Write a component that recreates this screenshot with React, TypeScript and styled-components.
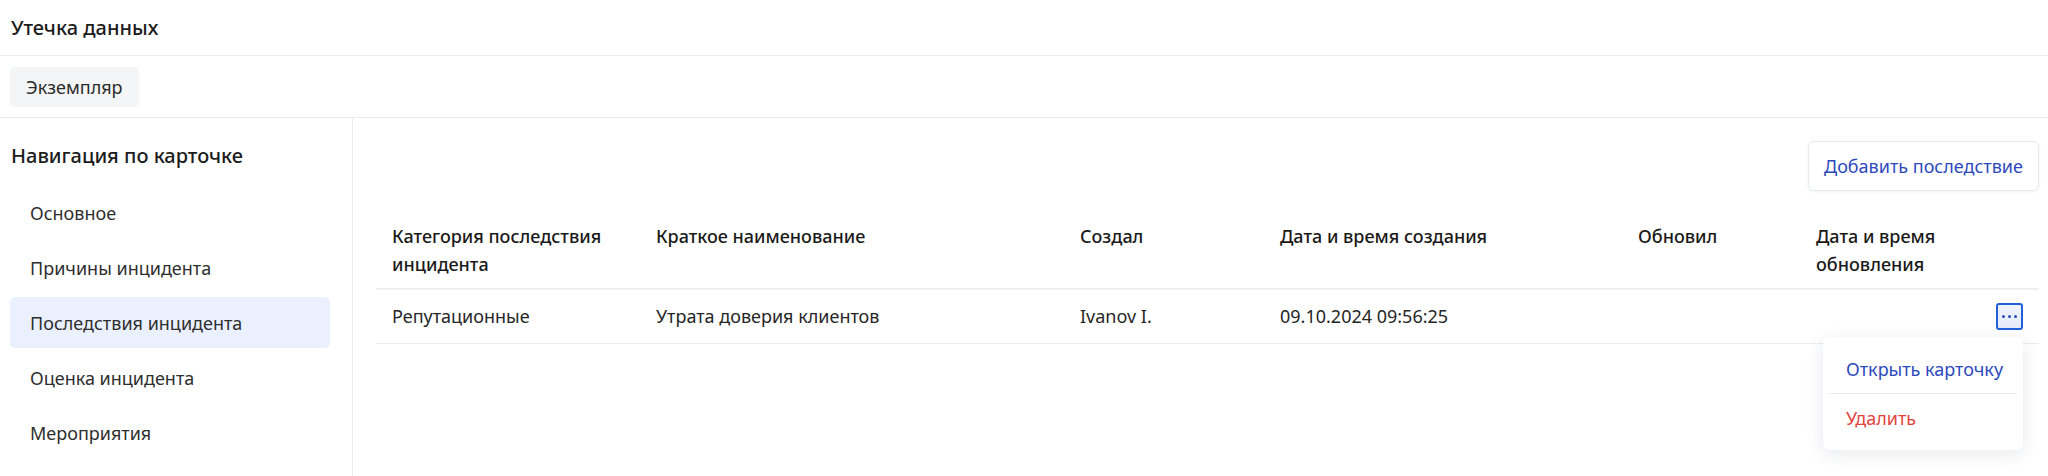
import styled, { createGlobalStyle } from "styled-components";

const navItems = [
  "Основное",
  "Причины инцидента",
  "Последствия инцидента",
  "Оценка инцидента",
  "Мероприятия",
];

const columns = [
  { title: "Категория последствия инцидента", width: 264 },
  { title: "Краткое наименование", width: 424 },
  { title: "Создал", width: 200 },
  { title: "Дата и время создания", width: 358 },
  { title: "Обновил", width: 178 },
  { title: "Дата и время обновления", width: 180 },
];

const rows = [
  {
    id: 1,
    cells: [
      "Репутационные",
      "Утрата доверия клиентов",
      "Ivanov I.",
      "09.10.2024 09:56:25",
      "",
      "",
    ],
  },
];

const GlobalStyle = createGlobalStyle`
  body {
    margin: 0;
    font-family: "Noto Sans", Inter, sans-serif;
    color: #1c1c1c;
    background: #fff;
  }
  * {
    box-sizing: border-box;
  }
`;

const Page = styled.div`
  width: 2048px;
  height: 476px;
  display: flex;
  flex-direction: column;
  overflow: hidden;
`;

const Header = styled.header`
  height: 56px;
  padding: 0 11px;
  display: flex;
  align-items: center;
  border-bottom: 1px solid #ececec;
`;

const Title = styled.h1`
  margin: 0;
  font-size: 20px;
  font-weight: 500;
`;

const TabBar = styled.div`
  height: 62px;
  padding: 11px 10px;
  display: flex;
  border-bottom: 1px solid #ececec;
`;

const Tab = styled.div`
  height: 40px;
  padding: 0 16px;
  display: flex;
  align-items: center;
  background: #f4f5f7;
  border-radius: 5px;
  font-size: 18px;
  color: #2a2a2a;
`;

const Body = styled.div`
  flex: 1;
  display: flex;
`;

const Sidebar = styled.aside`
  width: 353px;
  flex-shrink: 0;
  padding: 24px 22px 0 10px;
  border-right: 1px solid #ececec;
  display: flex;
  flex-direction: column;
`;

const NavTitle = styled.h2`
  margin: 0 0 17px 1px;
  font-size: 20px;
  line-height: 28px;
  font-weight: 500;
`;

const NavList = styled.ul`
  margin: 0;
  padding: 0;
  list-style: none;
  display: flex;
  flex-direction: column;
  gap: 4px;
`;

const NavItem = styled.li<{ $active?: boolean }>`
  height: 51px;
  padding: 0 20px;
  display: flex;
  align-items: center;
  border-radius: 5px;
  font-size: 18px;
  color: #2e2e2e;
  background: ${(p) => (p.$active ? "#eaf0fd" : "transparent")};
`;

const Main = styled.main`
  flex: 1;
  padding: 23px 9px 0 23px;
  display: flex;
  flex-direction: column;
`;

const Toolbar = styled.div`
  display: flex;
  justify-content: flex-end;
`;

const AddButton = styled.button`
  height: 50px;
  width: 231px;
  padding: 0;
  border: 1px solid #e8e9ed;
  border-radius: 6px;
  background: #fff;
  box-shadow: 0 1px 3px rgba(20, 30, 60, 0.06);
  font-family: inherit;
  font-size: 18px;
  color: #2d49bd;
`;

const Table = styled.table`
  margin-top: 21px;
  width: 100%;
  border-collapse: collapse;
  table-layout: fixed;
`;

const Th = styled.th`
  padding: 10px 16px;
  text-align: left;
  vertical-align: top;
  font-size: 18px;
  line-height: 28px;
  font-weight: 500;
  color: #1a1a1a;
  border-bottom: 2px solid #efefef;
`;

const Td = styled.td<{ $align?: "left" | "right" }>`
  height: 54px;
  padding: 0 16px;
  font-size: 18px;
  color: #262626;
  text-align: ${(p) => p.$align ?? "left"};
  border-bottom: 1px solid #ececec;
`;

const ActionWrap = styled.div`
  position: relative;
  display: inline-block;
  vertical-align: middle;
`;

const DotsButton = styled.button`
  width: 27px;
  height: 27px;
  padding: 0;
  display: flex;
  align-items: center;
  justify-content: center;
  gap: 3px;
  border: 2px solid #2160d9;
  border-radius: 3px;
  background: linear-gradient(#eef2fd, #e6ecfb);
`;

const Dot = styled.span`
  width: 3px;
  height: 3px;
  border-radius: 50%;
  background: #2b4bbf;
`;

const Menu = styled.div`
  position: absolute;
  top: 34px;
  right: 0;
  width: 200px;
  padding: 8px 6px;
  background: #fff;
  border-radius: 7px;
  box-shadow: 0 4px 18px rgba(30, 40, 80, 0.1);
  text-align: left;
  z-index: 2;
`;

const MenuItem = styled.div<{ $danger?: boolean }>`
  height: 48px;
  padding: 0 17px;
  display: flex;
  align-items: center;
  white-space: nowrap;
  font-size: 18px;
  color: ${(p) => (p.$danger ? "#e2453d" : "#2d49bd")};
`;

const MenuDivider = styled.div`
  height: 1px;
  background: #ececec;
`;

export default function App() {
  return (
    <Page>
      <GlobalStyle />
      <Header>
        <Title>Утечка данных</Title>
      </Header>
      <TabBar>
        <Tab>Экземпляр</Tab>
      </TabBar>
      <Body>
        <Sidebar>
          <NavTitle>Навигация по карточке</NavTitle>
          <NavList>
            {navItems.map((item) => (
              <NavItem key={item} $active={item === "Последствия инцидента"}>
                {item}
              </NavItem>
            ))}
          </NavList>
        </Sidebar>
        <Main>
          <Toolbar>
            <AddButton>Добавить последствие</AddButton>
          </Toolbar>
          <Table>
            <colgroup>
              {columns.map((c) => (
                <col key={c.title} style={{ width: c.width }} />
              ))}
              <col />
            </colgroup>
            <thead>
              <tr>
                {columns.map((c) => (
                  <Th key={c.title}>{c.title}</Th>
                ))}
                <Th />
              </tr>
            </thead>
            <tbody>
              {rows.map((row) => (
                <tr key={row.id}>
                  {row.cells.map((cell, i) => (
                    <Td key={i}>{cell}</Td>
                  ))}
                  <Td $align="right">
                    <ActionWrap>
                      <DotsButton aria-label="Действия">
                        <Dot />
                        <Dot />
                        <Dot />
                      </DotsButton>
                      <Menu>
                        <MenuItem>Открыть карточку</MenuItem>
                        <MenuDivider />
                        <MenuItem $danger>Удалить</MenuItem>
                      </Menu>
                    </ActionWrap>
                  </Td>
                </tr>
              ))}
            </tbody>
          </Table>
        </Main>
      </Body>
    </Page>
  );
}
